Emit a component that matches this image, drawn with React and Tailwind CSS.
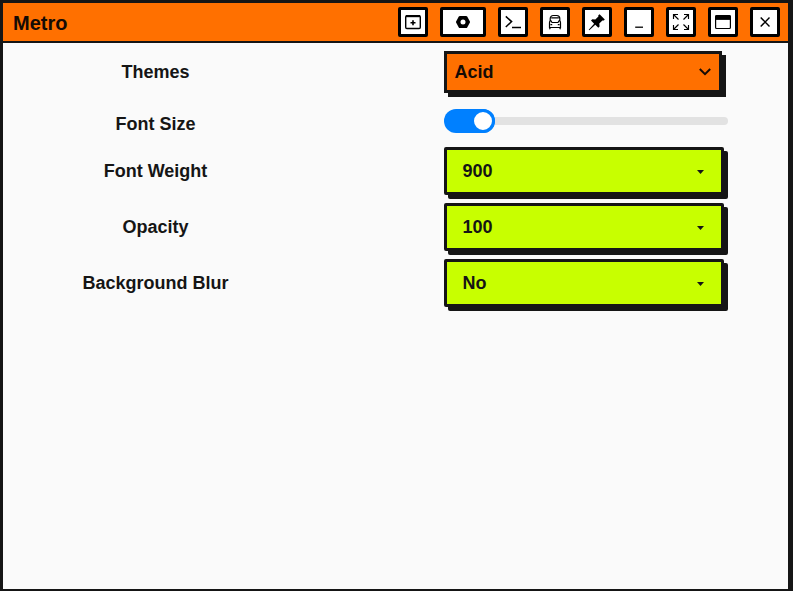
import React from "react";

function TitleButton({ label, wide = false, children }) {
  return (
    <button
      aria-label={label}
      className={`${wide ? "w-[46px]" : "w-[30px]"} flex h-[30px] items-center justify-center rounded-[2px] border-[3px] border-black bg-white text-black`}
    >
      <svg width="24" height="24" viewBox="0 0 24 24" fill="none" stroke="currentColor" className="shrink-0">
        {children}
      </svg>
    </button>
  );
}

function TitleBar() {
  return (
    <header className="flex h-10 items-center justify-between border-b-2 border-[#151515] bg-[#ff7000] pr-2 pl-[10px]">
      <h1 className="pt-[2px] text-xl leading-none font-bold text-[#150b05]">Metro</h1>
      <div className="flex gap-3">
        <TitleButton label="New window">
          <rect x="4.7" y="5.7" width="14.6" height="12.8" rx="1.2" strokeWidth="1.4" />
          <path d="M5 6.1h14" strokeWidth="2.2" />
          <path d="M12 10.2v5M9.5 12.7h5" strokeWidth="1.6" />
        </TitleButton>
        <TitleButton label="Settings" wide>
          <path
            d="M8.9 6h6.2c.5 0 .9.2 1.1.6l2.7 4.8c.2.4.2.8 0 1.2l-2.7 4.8c-.2.4-.6.6-1.1.6H8.9c-.5 0-.9-.2-1.1-.6l-2.7-4.8c-.2-.4-.2-.8 0-1.2l2.7-4.8c.2-.4.6-.6 1.1-.6zM12 9.5a2.5 2.5 0 1 0 0 5 2.5 2.5 0 0 0 0-5z"
            fill="currentColor"
            fillRule="evenodd"
            stroke="none"
          />
        </TitleButton>
        <TitleButton label="Terminal">
          <path d="M4.8 6.4l5.8 5.2-5.8 5.4M11 17.4h9" strokeWidth="1.5" />
        </TitleButton>
        <TitleButton label="Train">
          <path
            d="M7.2 10.5V8.6c0-1.9 1.3-3.1 3-3.1h3.6c1.7 0 3 1.2 3 3.1v1.9M7.2 10.5c-.5.7-.7 1.5-.7 2.3v4.7h11v-4.7c0-.8-.2-1.6-.7-2.3M8.2 7.9h7.6M7.6 10.3l1.4 2.2h6l1.4-2.2M7.4 17.5L6.5 19.3M16.6 17.5l.9 1.8"
            strokeWidth="1.2"
          />
          <path d="M7.4 14.7h1.8M14.8 14.7h1.8" strokeWidth="1.2" />
        </TitleButton>
        <TitleButton label="Pin">
          <path
            d="M14.6 4.2l5.2 5.2-1 1.1-1.4-.1-3.1 3.2.3 2.8-1.3 1.3-3-2.9L4.3 20.3l-.6-.6 5.4-5.9-3.1-3.3 1.3-1.3 3 .2 3.1-3-.1-1.2z"
            fill="currentColor"
            stroke="none"
          />
        </TitleButton>
        <TitleButton label="Minimize">
          <path d="M8.2 17.2h7.8" strokeWidth="1.3" />
        </TitleButton>
        <TitleButton label="Full screen">
          <path
            d="M4.5 9v-4.5h4.5M4.5 4.5l5 5M15 4.5h4.5V9M19.5 4.5l-5 5M4.5 15v4.5H9M4.5 19.5l5-5M15 19.5h4.5V15M19.5 19.5l-5-5"
            strokeWidth="1.15"
          />
        </TitleButton>
        <TitleButton label="Maximize">
          <rect x="4.6" y="5.6" width="14.8" height="12.9" rx="1" strokeWidth="1.2" />
          <path d="M4.5 7.6h15" strokeWidth="4.6" />
        </TitleButton>
        <TitleButton label="Close">
          <path d="M7.7 7.5l8.8 9M16.5 7.5l-8.8 9" strokeWidth="1.4" />
        </TitleButton>
      </div>
    </header>
  );
}

function Row({ label, className, labelClassName = "", children }) {
  return (
    <div className={`flex items-center ${className}`}>
      <div className={`w-[305px] text-center leading-5 ${labelClassName}`}>{label}</div>
      <div className="ml-[136px]">{children}</div>
    </div>
  );
}

function DropDown({ value }) {
  return (
    <button className="flex h-12 w-[280px] items-center justify-between rounded-[2px] border-[3px] border-[#151515] bg-[#c8ff00] pr-[17px] pl-[15.5px] leading-5 shadow-[4px_4px_0_#151515]">
      {value}
      <svg width="7" height="4" viewBox="0 0 7 4" className="mt-[2px]">
        <path d="M0 0h7L3.5 4z" fill="#151515" />
      </svg>
    </button>
  );
}

export default function App() {
  return (
    <div className="h-[591px] w-[793px] overflow-hidden border-t-[3px] border-r-[5px] border-b-2 border-l-[3px] border-[#151515] bg-[#fafafa] font-['Liberation_Sans',Arial,sans-serif] text-lg font-bold text-[#151515]">
      <TitleBar />
      <main className="flex flex-col pt-2">
        <Row label="Themes" className="h-[42px]">
          <button className="flex h-[42px] w-[278px] items-center justify-between border-[3px] border-[#151515] bg-[#ff7000] pr-2 pl-[7.5px] leading-5 text-[#150b05] shadow-[4px_4px_0_#151515]">
            Acid
            <svg width="12" height="8" viewBox="0 0 12 8" fill="none" stroke="currentColor" strokeWidth="2">
              <path d="M.8 1L6 6.2 11.2 1" />
            </svg>
          </button>
        </Row>
        <Row label="Font Size" className="mt-4 h-6" labelClassName="pt-[6px]">
          <div className="flex h-6 w-[284px] items-center">
            <div className="flex h-6 w-[51px] justify-end rounded-full bg-[#0080ff]">
              <div className="h-6 w-6 rounded-full border-[3px] border-[#0080ff] bg-white" />
            </div>
            <div className="h-2 flex-1 rounded-r-full bg-[#e2e2e2]" />
          </div>
        </Row>
        <Row label="Font Weight" className="mt-[14px] h-12">
          <DropDown value="900" />
        </Row>
        <Row label="Opacity" className="mt-2 h-12">
          <DropDown value="100" />
        </Row>
        <Row label="Background Blur" className="mt-2 h-12">
          <DropDown value="No" />
        </Row>
      </main>
    </div>
  );
}
